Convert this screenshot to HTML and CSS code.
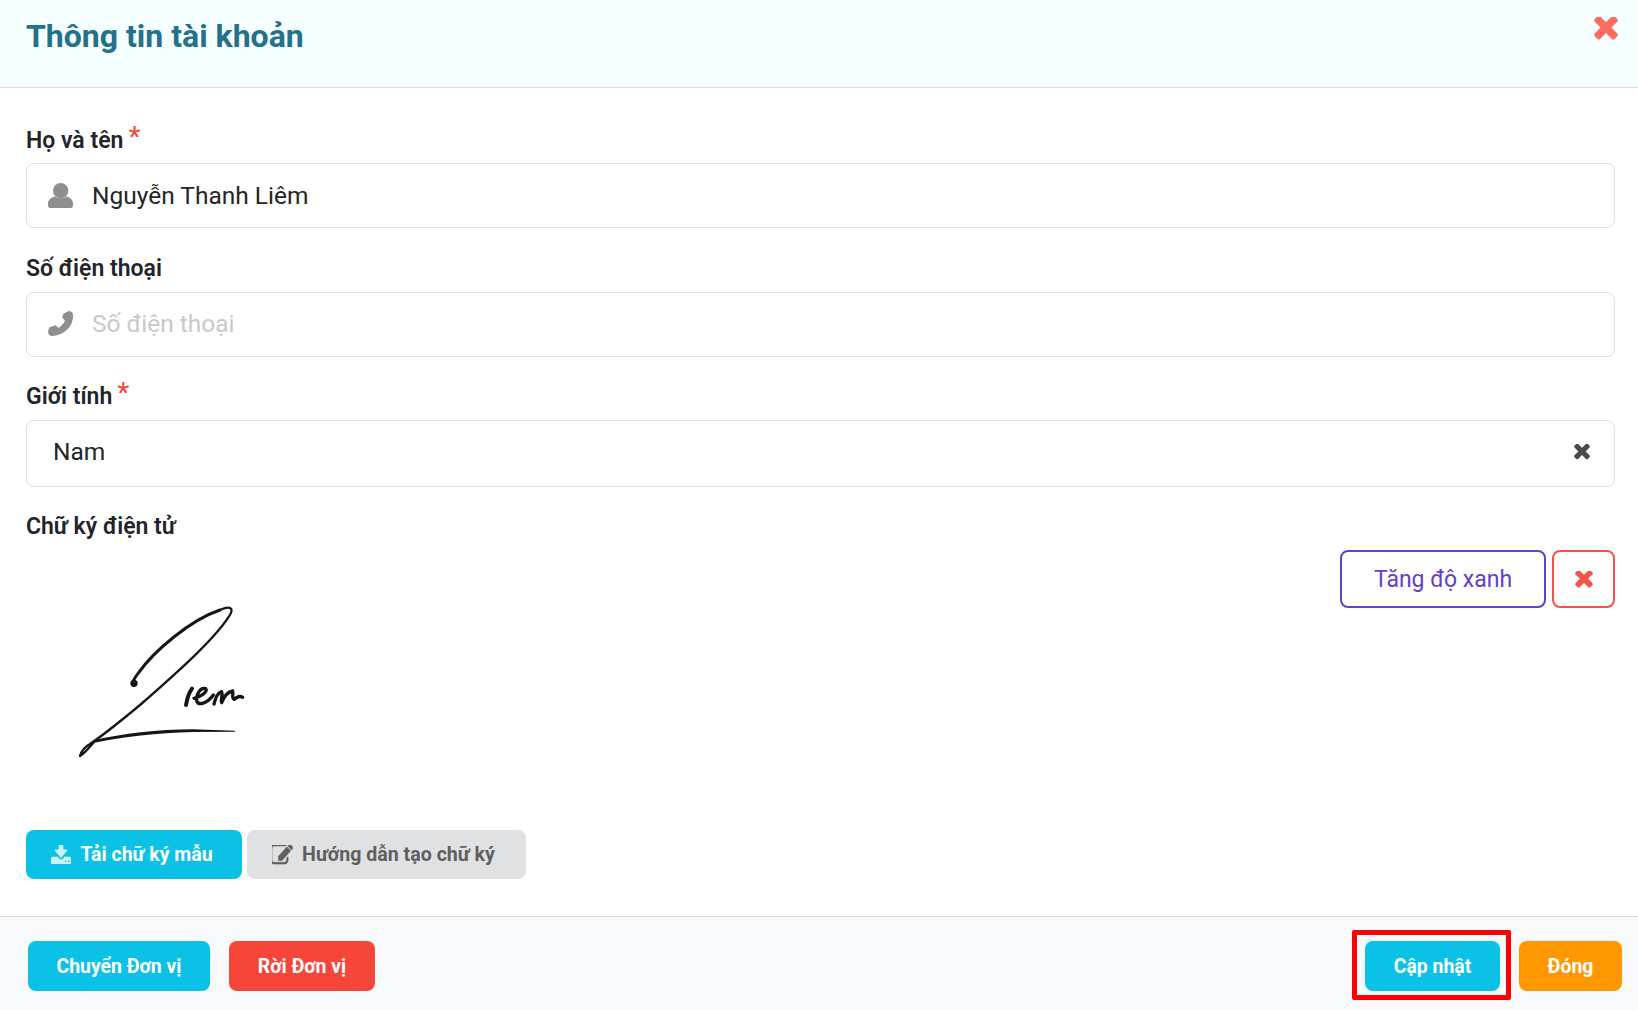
FILE: index.html
```html
<!DOCTYPE html>
<html lang="vi">
<head>
<meta charset="utf-8">
<title>Thông tin tài khoản</title>
<link rel="stylesheet" href="styles.css">
</head>
<body>
<div class="dialog">
  <header class="head">
    <h1 class="title">Thông tin tài khoản</h1>
    <svg class="close" viewBox="102 346 1204 1100"><path d="M1298 1214q0 40-28 68l-136 136q-28 28-68 28t-68-28l-294-294-294 294q-28 28-68 28t-68-28l-136-136q-28-28-28-68t28-68l294-294-294-294q-28-28-28-68t28-68l136-136q28-28 68-28t68 28l294 294 294-294q28-28 68-28t68 28l136 136q28 28 28 68t-28 68l-294 294 294 294q28 28 28 68z"/></svg>
  </header>
  <main class="content">
    <div class="field field-first">
      <div class="label">Họ và tên<span class="req">*</span></div>
      <div class="box">
        <svg class="ico" viewBox="0 0 75 75"><circle cx="38" cy="23" r="23"/><path d="M0 68V62C0 50 10 44 21 40C26 48 50 48 55 40C66 44 75 50 75 62V68Q75 75 68 75H7Q0 75 0 68Z"/></svg>
        <span class="val">Nguyễn Thanh Liêm</span>
      </div>
    </div>
    <div class="field field-tight">
      <div class="label">Số điện thoại</div>
      <div class="box box-phone">
        <svg class="ico" viewBox="0 0 75 75"><path d="M46 8L62 0Q72 0 75 10C78 45 50 72 12 75Q2 75 0 62L4 49L23 43L32 51C40 45 46 38 51 29L43 20Z"/></svg>
        <span class="val placeholder">Số điện thoại</span>
      </div>
    </div>
    <div class="field">
      <div class="label">Giới tính<span class="req">*</span></div>
      <div class="box box-select">
        <span class="val">Nam</span>
        <svg class="clear" viewBox="102 346 1204 1100"><path d="M1298 1214q0 40-28 68l-136 136q-28 28-68 28t-68-28l-294-294-294 294q-28 28-68 28t-68-28l-136-136q-28-28-28-68t28-68l294-294-294-294q-28-28-28-68t28-68l136-136q28-28 68-28t68 28l294 294 294-294q28-28 68-28t68 28l136 136q28 28 28 68t-28 68l-294 294 294 294q28 28 28 68z"/></svg>
      </div>
    </div>
    <div class="label sign-label">Chữ ký điện tử</div>
    <div class="sign-row">
      <svg class="signature" viewBox="0 0 720 570" fill="none" stroke="#161616" stroke-linecap="round" stroke-linejoin="round">
        <circle cx="282" cy="310" r="11" fill="#161616" stroke="none"/>
        <path stroke-width="9" d="M283 312C270 318 282 295 296 278C340 215 450 120 540 90"/>
        <path stroke-width="7" d="M540 90C580 72 580 92 565 112C520 180 420 270 300 375C240 425 190 465 150 492C135 500 125 510 120 528C135 518 145 505 160 488"/>
        <path fill="#161616" stroke="none" d="M160 481C250 461 350 448 460 448L585 452V455L460 456C350 458 250 471 160 489Z"/>
        <path stroke-width="12" d="M438 375C442 352 447 338 456 326"/>
        <path stroke-width="10" d="M462 355C480 352 505 335 497 326C480 320 468 345 470 362C475 378 500 372 520 345"/>
        <path stroke-width="10" d="M522 372C528 350 532 340 545 335C550 345 540 360 545 368C552 350 565 335 578 333C580 345 575 355 582 358C592 352 598 345 608 352"/>
      </svg>
      <div class="sign-tools">
        <button class="btn-line btn-purple">Tăng độ xanh</button>
        <button class="btn-line btn-redline"><svg class="x-red" viewBox="102 346 1204 1100"><path d="M1298 1214q0 40-28 68l-136 136q-28 28-68 28t-68-28l-294-294-294 294q-28 28-68 28t-68-28l-136-136q-28-28-28-68t28-68l294-294-294-294q-28-28-28-68t28-68l136-136q28-28 68-28t68 28l294 294 294-294q28-28 68-28t68 28l136 136q28 28 28 68t-28 68l-294 294 294 294q28 28 28 68z"/></svg></button>
      </div>
    </div>
    <div class="sign-actions">
      <button class="btn btn-sample">
        <svg class="btn-ico ico-light" viewBox="64 192 1664 1408" preserveAspectRatio="none"><path d="M1344 1344q0-26-19-45t-45-19-45 19-19 45 19 45 45 19 45-19 19-45zm256 0q0-26-19-45t-45-19-45 19-19 45 19 45 45 19 45-19 19-45zm128-224v320q0 40-28 68t-68 28h-1472q-40 0-68-28t-28-68v-320q0-40 28-68t68-28h465l135 136q58 56 136 56t136-56l136-136h464q40 0 68 28t28 68zm-325-569q17 41-14 70l-448 448q-18 19-45 19t-45-19l-448-448q-31-29-14-70 17-39 59-39h256v-448q0-26 19-45t45-19h256q26 0 45 19t19 45v448h256q42 0 59 39z"/></svg>
        Tải chữ ký mẫu
      </button>
      <button class="btn btn-guide">
        <svg class="btn-ico btn-ico-edit" viewBox="128 192 1664 1408" preserveAspectRatio="none"><path d="M1408 1058v190q0 119-84.5 203.5t-203.5 84.5h-832q-119 0-203.5-84.5t-84.5-203.5v-832q0-119 84.5-203.5t203.5-84.5h832q63 0 117 25 15 7 18 23 3 17-9 29l-49 49q-14 14-32 8-23-6-45-6h-832q-66 0-113 47t-47 113v832q0 66 47 113t113 47h832q66 0 113-47t47-113v-126q0-13 9-22l64-64q15-15 35-7t20 29z"/><path d="M1312 320l288 288-672 672h-288v-288zm444 132l-92 92-288-288 92-92q28-28 68-28t68 28l152 152q28 28 28 68t-28 68z"/></svg>
        Hướng dẫn tạo chữ ký
      </button>
    </div>
  </main>
  <footer class="foot">
    <div class="foot-left">
      <button class="btn btn-f btn-transfer">Chuyển Đơn vị</button>
      <button class="btn btn-f btn-leave">Rời Đơn vị</button>
    </div>
    <div class="foot-right">
      <button class="btn btn-f btn-update">Cập nhật</button>
      <button class="btn btn-f btn-close">Đóng</button>
    </div>
  </footer>
</div>
</body>
</html>
```
FILE: styles.css
```css
* { box-sizing: border-box; }
html, body { margin: 0; height: 100%; }
body { font-family: Roboto, "Noto Sans", sans-serif; color: #212529; background: #fff; overflow: hidden; }
button { font-family: inherit; cursor: pointer; }

.dialog { height: 1010px; display: flex; flex-direction: column; }

.head {
  height: 88px; flex: none; display: flex; justify-content: space-between; align-items: flex-start;
  padding: 0 20px 0 26px; background: #f5ffff; border-bottom: 1px solid #d8dfe0;
}
.title { margin: 16px 0 0; font-size: 32px; line-height: 40px; font-weight: 700; color: #25708a; }
.close { width: 24px; height: 23px; margin-top: 17px; fill: #ff6b5e; }

.content { flex: 1; display: flex; flex-direction: column; padding: 40px 23px 0 26px; }
.field { margin-bottom: 28px; }
.field-tight { margin-bottom: 27px; }
.label { font-size: 23px; line-height: 26px; font-weight: 600; color: #212529; padding-bottom: 10px; }
.field-first .label { padding-bottom: 9px; }
.req { color: #f64539; font-size: 28px; font-weight: 400; line-height: 0; margin-left: 5px; position: relative; top: -2px; }

.box {
  height: 65px; display: flex; align-items: center; padding: 0 21px;
  border: 1px solid #dedfe0; border-radius: 8px; background: #fff;
}
.box-phone { padding-bottom: 2px; }
.box-select { height: 67px; justify-content: space-between; padding: 0 24px 3px 26px; }
.ico { width: 25px; height: 25px; fill: #8f8f8f; flex: none; margin-right: 19px; }
.val { font-size: 24.5px; line-height: 32px; color: #252525; }
.placeholder { color: #c9c9c9; }
.clear { width: 16px; height: 16px; fill: #4a4a4a; }

.sign-label { margin-top: -1px; padding-bottom: 10px; }
.sign-row { display: flex; justify-content: space-between; align-items: flex-start; }
.signature { width: 240px; height: 190px; margin: 30px 0 0 14px; filter: blur(0.35px); }
.sign-tools { display: flex; gap: 6px; }
.btn-line { height: 58px; background: #fff; border-width: 2px; border-style: solid; border-radius: 8px; font-size: 23px; padding: 0; }
.btn-purple { width: 206px; color: #6240c9; border-color: #6240c9; }
.btn-redline { width: 63px; border-color: #f5534a; display: flex; align-items: center; justify-content: center; }
.x-red { width: 18px; height: 17px; fill: #f5534a; }

.sign-actions { display: flex; gap: 5px; margin-top: 60px; }
.btn { border: 0; border-radius: 8px; font-weight: 700; color: #fff; display: flex; align-items: center; justify-content: center; padding: 0; }
.btn-sample, .btn-guide { height: 49px; font-size: 19.5px; }
.btn-sample { width: 216px; background: #0bc2e6; padding-right: 4px; }
.btn-guide { width: 279px; background: #e0e1e3; color: #5f5f60; padding-right: 6px; font-size: 19.6px; }
.btn-ico { width: 20px; height: 20px; margin-right: 9px; flex: none; }
.ico-light { fill: #cdf3fa; }
.btn-ico-edit { width: 21px; fill: #5f5f60; stroke: #5f5f60; stroke-width: 40; }

.foot {
  height: 94px; flex: none; display: flex; justify-content: space-between; align-items: flex-start;
  padding: 24px 16px 0 28px; background: #f8f9fb; border-top: 1px solid #dcdddf;
}
.foot-left { display: flex; gap: 19px; }
.foot-right { display: flex; gap: 19px; }
.btn-f { height: 50px; font-size: 19.4px; }
.btn-transfer { width: 182px; background: #0bc2e6; }
.btn-leave { width: 146px; background: #f64539; }
.btn-update { width: 135px; background: #0bc2e6; position: relative; }
.btn-update::after {
  content: ""; position: absolute; top: -11px; right: -11px; bottom: -9px; left: -13px;
  border: 5px solid #f00; border-radius: 2px; pointer-events: none;
}
.btn-close { width: 103px; background: #ff9800; }
```
